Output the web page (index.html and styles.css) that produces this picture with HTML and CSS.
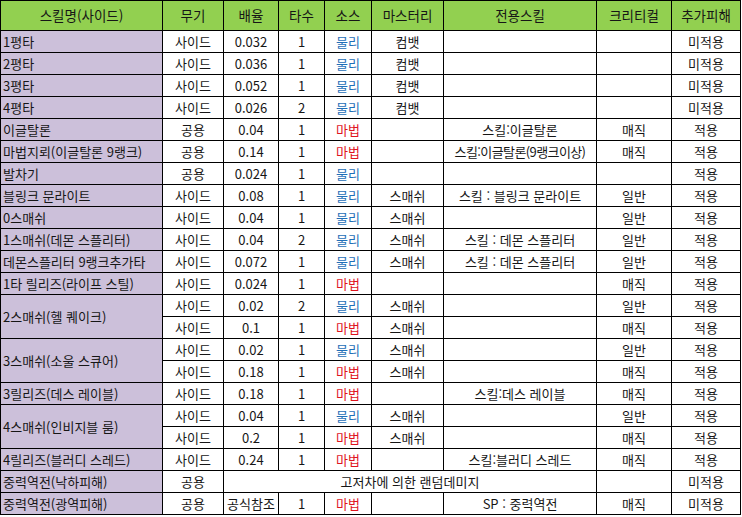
FILE: index.html
```html
<!DOCTYPE html>
<html lang="ko">
<head>
<meta charset="utf-8">
<title>스킬</title>
<link rel="stylesheet" href="styles.css">
</head>
<body>
<table class="sheet">
<colgroup>
<col class="c1"><col class="c2"><col class="c3"><col class="c4"><col class="c5"><col class="c6"><col class="c7"><col class="c8"><col class="c9">
</colgroup>
<thead>
<tr class="head">
<th>스킬명(사이드)</th><th>무기</th><th>배율</th><th>타수</th><th>소스</th><th>마스터리</th><th>전용스킬</th><th>크리티컬</th><th>추가피해</th>
</tr>
</thead>
<tbody>
<tr><td class="nm">1평타</td><td>사이드</td><td>0.032</td><td>1</td><td class="phy">물리</td><td>컴뱃</td><td></td><td></td><td>미적용</td></tr>
<tr><td class="nm">2평타</td><td>사이드</td><td>0.036</td><td>1</td><td class="phy">물리</td><td>컴뱃</td><td></td><td></td><td>미적용</td></tr>
<tr><td class="nm">3평타</td><td>사이드</td><td>0.052</td><td>1</td><td class="phy">물리</td><td>컴뱃</td><td></td><td></td><td>미적용</td></tr>
<tr><td class="nm">4평타</td><td>사이드</td><td>0.026</td><td>2</td><td class="phy">물리</td><td>컴뱃</td><td></td><td></td><td>미적용</td></tr>
<tr><td class="nm">이글탈론</td><td>공용</td><td>0.04</td><td>1</td><td class="mag">마법</td><td></td><td>스킬:이글탈론</td><td>매직</td><td>적용</td></tr>
<tr><td class="nm">마법지뢰(이글탈론 9랭크)</td><td>공용</td><td>0.14</td><td>1</td><td class="mag">마법</td><td></td><td class="tight">스킬:이글탈론(9랭크이상)</td><td>매직</td><td>적용</td></tr>
<tr><td class="nm">발차기</td><td>공용</td><td>0.024</td><td>1</td><td class="phy">물리</td><td></td><td></td><td></td><td>적용</td></tr>
<tr><td class="nm">블링크 문라이트</td><td>사이드</td><td>0.08</td><td>1</td><td class="phy">물리</td><td>스매쉬</td><td>스킬 : 블링크 문라이트</td><td>일반</td><td>적용</td></tr>
<tr><td class="nm">0스매쉬</td><td>사이드</td><td>0.04</td><td>1</td><td class="phy">물리</td><td>스매쉬</td><td></td><td>일반</td><td>적용</td></tr>
<tr><td class="nm">1스매쉬(데몬 스플리터)</td><td>사이드</td><td>0.04</td><td>2</td><td class="phy">물리</td><td>스매쉬</td><td>스킬 : 데몬 스플리터</td><td>일반</td><td>적용</td></tr>
<tr><td class="nm">데몬스플리터 9랭크추가타</td><td>사이드</td><td>0.072</td><td>1</td><td class="phy">물리</td><td>스매쉬</td><td>스킬 : 데몬 스플리터</td><td>일반</td><td>적용</td></tr>
<tr><td class="nm">1타 릴리즈(라이프 스틸)</td><td>사이드</td><td>0.024</td><td>1</td><td class="mag">마법</td><td></td><td></td><td>매직</td><td>적용</td></tr>
<tr><td class="nm" rowspan="2">2스매쉬(헬 퀘이크)</td><td>사이드</td><td>0.02</td><td>2</td><td class="phy">물리</td><td>스매쉬</td><td></td><td>일반</td><td>적용</td></tr>
<tr><td>사이드</td><td>0.1</td><td>1</td><td class="mag">마법</td><td>스매쉬</td><td></td><td>매직</td><td>적용</td></tr>
<tr><td class="nm" rowspan="2">3스매쉬(소울 스큐어)</td><td>사이드</td><td>0.02</td><td>1</td><td class="phy">물리</td><td>스매쉬</td><td></td><td>일반</td><td>적용</td></tr>
<tr><td>사이드</td><td>0.18</td><td>1</td><td class="mag">마법</td><td>스매쉬</td><td></td><td>매직</td><td>적용</td></tr>
<tr><td class="nm">3릴리즈(데스 레이블)</td><td>사이드</td><td>0.18</td><td>1</td><td class="mag">마법</td><td></td><td>스킬:데스 레이블</td><td>매직</td><td>적용</td></tr>
<tr><td class="nm" rowspan="2">4스매쉬(인비지블 룸)</td><td>사이드</td><td>0.04</td><td>1</td><td class="phy">물리</td><td>스매쉬</td><td></td><td>일반</td><td>적용</td></tr>
<tr><td>사이드</td><td>0.2</td><td>1</td><td class="mag">마법</td><td>스매쉬</td><td></td><td>매직</td><td>적용</td></tr>
<tr><td class="nm">4릴리즈(블러디 스레드)</td><td>사이드</td><td>0.24</td><td>1</td><td class="mag">마법</td><td></td><td>스킬:블러디 스레드</td><td>매직</td><td>적용</td></tr>
<tr><td class="nm">중력역전(낙하피해)</td><td>공용</td><td colspan="5">고저차에 의한 랜덤데미지</td><td></td><td>미적용</td></tr>
<tr><td class="nm">중력역전(광역피해)</td><td>공용</td><td>공식참조</td><td>1</td><td class="mag">마법</td><td></td><td>SP : 중력역전</td><td>매직</td><td>미적용</td></tr>
</tbody>
</table>
</body>
</html>
```
FILE: styles.css
```css
html, body {
  margin: 0;
  padding: 0;
  background: #ffffff;
}

body {
  font-family: "Noto Sans CJK KR", "Noto Sans", sans-serif;
  font-size: 13px;
  color: #161616;
}

.sheet {
  border-collapse: collapse;
  table-layout: fixed;
  width: 741px;
}

.c1 { width: 162px; }
.c2 { width: 61px; }
.c3 { width: 55px; }
.c4 { width: 46px; }
.c5 { width: 47px; }
.c6 { width: 72px; }
.c7 { width: 153px; }
.c8 { width: 75px; }
.c9 { width: 69px; }

.sheet th,
.sheet td {
  border: 1px solid #000;
  padding: 2px 0;
  text-align: center;
  vertical-align: middle;
  white-space: nowrap;
  overflow: hidden;
  line-height: 17px;
  font-weight: normal;
}

.head th {
  background: #92d050;
  font-size: 13.5px;
  padding: 6px 0;
}

.sheet td.nm {
  background: #ccc0da;
  text-align: left;
  padding-left: 2px;
}

.phy { color: #1f6fb8; }
.mag { color: #e0141e; }

.tight { letter-spacing: -0.6px; }
```
